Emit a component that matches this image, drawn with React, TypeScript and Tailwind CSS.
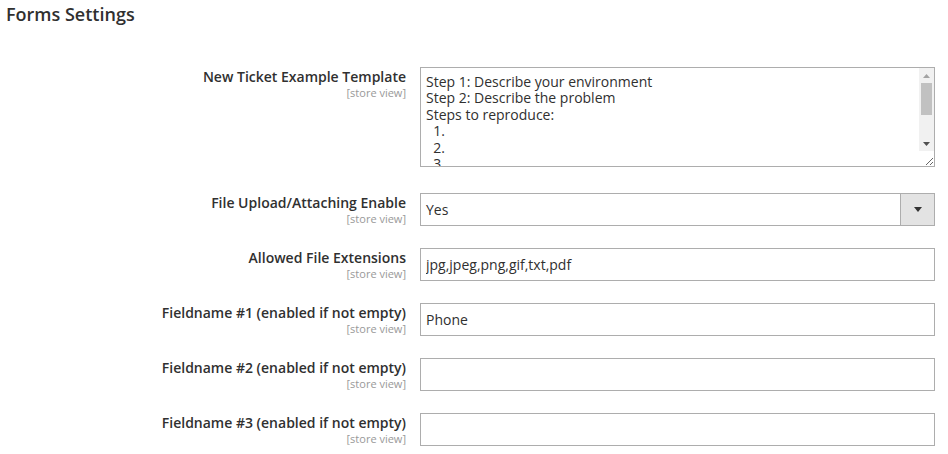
import React from 'react';

const template = `Step 1: Describe your environment
Step 2: Describe the problem
Steps to reproduce:
  1.
  2.
  3.

Expected result:

Actual result:
`;

function Label({ title }: { title: string }) {
  return (
    <div className="w-[406px] shrink-0 pt-[1px] text-right">
      <div className="text-[14px] leading-[18px] font-semibold text-[#303030]">{title}</div>
      <div className="text-[11px] leading-[13px] text-[#999999]">[store view]</div>
    </div>
  );
}

function TextInput({ value }: { value: string }) {
  return (
    <input
      type="text"
      readOnly
      defaultValue={value}
      className="w-[515px] h-[33px] border border-[#adadad] bg-white px-[5px] text-[14px] text-[#303030] outline-none"
    />
  );
}

// classic scrollbar drawn over the textarea's right edge
function FakeScrollbar() {
  return (
    <div className="absolute top-[1px] right-[1px] w-[15px] h-[83px] bg-[#f1f1f1] flex flex-col">
      <div className="h-[15px] flex items-center justify-center">
        <svg width="7" height="4" viewBox="0 0 7 4">
          <path d="M3.5 0L7 4H0z" fill="#a3a3a3" />
        </svg>
      </div>
      <div className="h-[32px] mx-[2px] bg-[#c1c1c1]" />
      <div className="flex-1" />
      <div className="h-[15px] flex items-center justify-center">
        <svg width="7" height="4" viewBox="0 0 7 4">
          <path d="M0 0h7L3.5 4z" fill="#505050" />
        </svg>
      </div>
    </div>
  );
}

export default function App() {
  const fields = [
    { title: 'Allowed File Extensions', value: 'jpg,jpeg,png,gif,txt,pdf' },
    { title: 'Fieldname #1 (enabled if not empty)', value: 'Phone' },
    { title: 'Fieldname #2 (enabled if not empty)', value: '' },
    { title: 'Fieldname #3 (enabled if not empty)', value: '' },
  ];

  return (
    <div
      className="w-[948px] h-[454px] bg-white overflow-hidden"
      style={{ fontFamily: '"Open Sans", "Liberation Sans", sans-serif' }}
    >
      {/* Section title */}
      <h2 className="pl-[6px] pt-[2px] text-[18px] leading-[24px] font-semibold text-[#303030]">Forms Settings</h2>

      <div className="mt-[41px] flex flex-col">
        {/* Template textarea */}
        <div className="flex items-start gap-[14px]">
          <Label title="New Ticket Example Template" />
          <div className="relative w-[515px] h-[100px]">
            <textarea
              readOnly
              defaultValue={template}
              className="block w-[515px] h-[100px] border border-[#adadad] bg-white pl-[5px] pr-[16px] pt-[6px] text-[14px] leading-[16.4px] text-[#303030] overflow-hidden outline-none resize-y"
            />
            <FakeScrollbar />
          </div>
        </div>

        {/* Select */}
        <div className="mt-[26px] flex items-start gap-[14px]">
          <Label title="File Upload/Attaching Enable" />
          <div className="w-[515px] h-[33px] border border-[#adadad] bg-white flex">
            <div className="flex-1 flex items-center px-[5px] text-[14px] text-[#303030]">Yes</div>
            <div className="w-[34px] border-l border-[#adadad] bg-[#e3e3e3] flex items-center justify-center">
              <svg width="8" height="5" viewBox="0 0 8 5">
                <path d="M0 0h8L4 5z" fill="#333333" />
              </svg>
            </div>
          </div>
        </div>

        {fields.map((f) => (
          <div key={f.title} className="mt-[22px] flex items-start gap-[14px]">
            <Label title={f.title} />
            <TextInput value={f.value} />
          </div>
        ))}
      </div>
    </div>
  );
}
